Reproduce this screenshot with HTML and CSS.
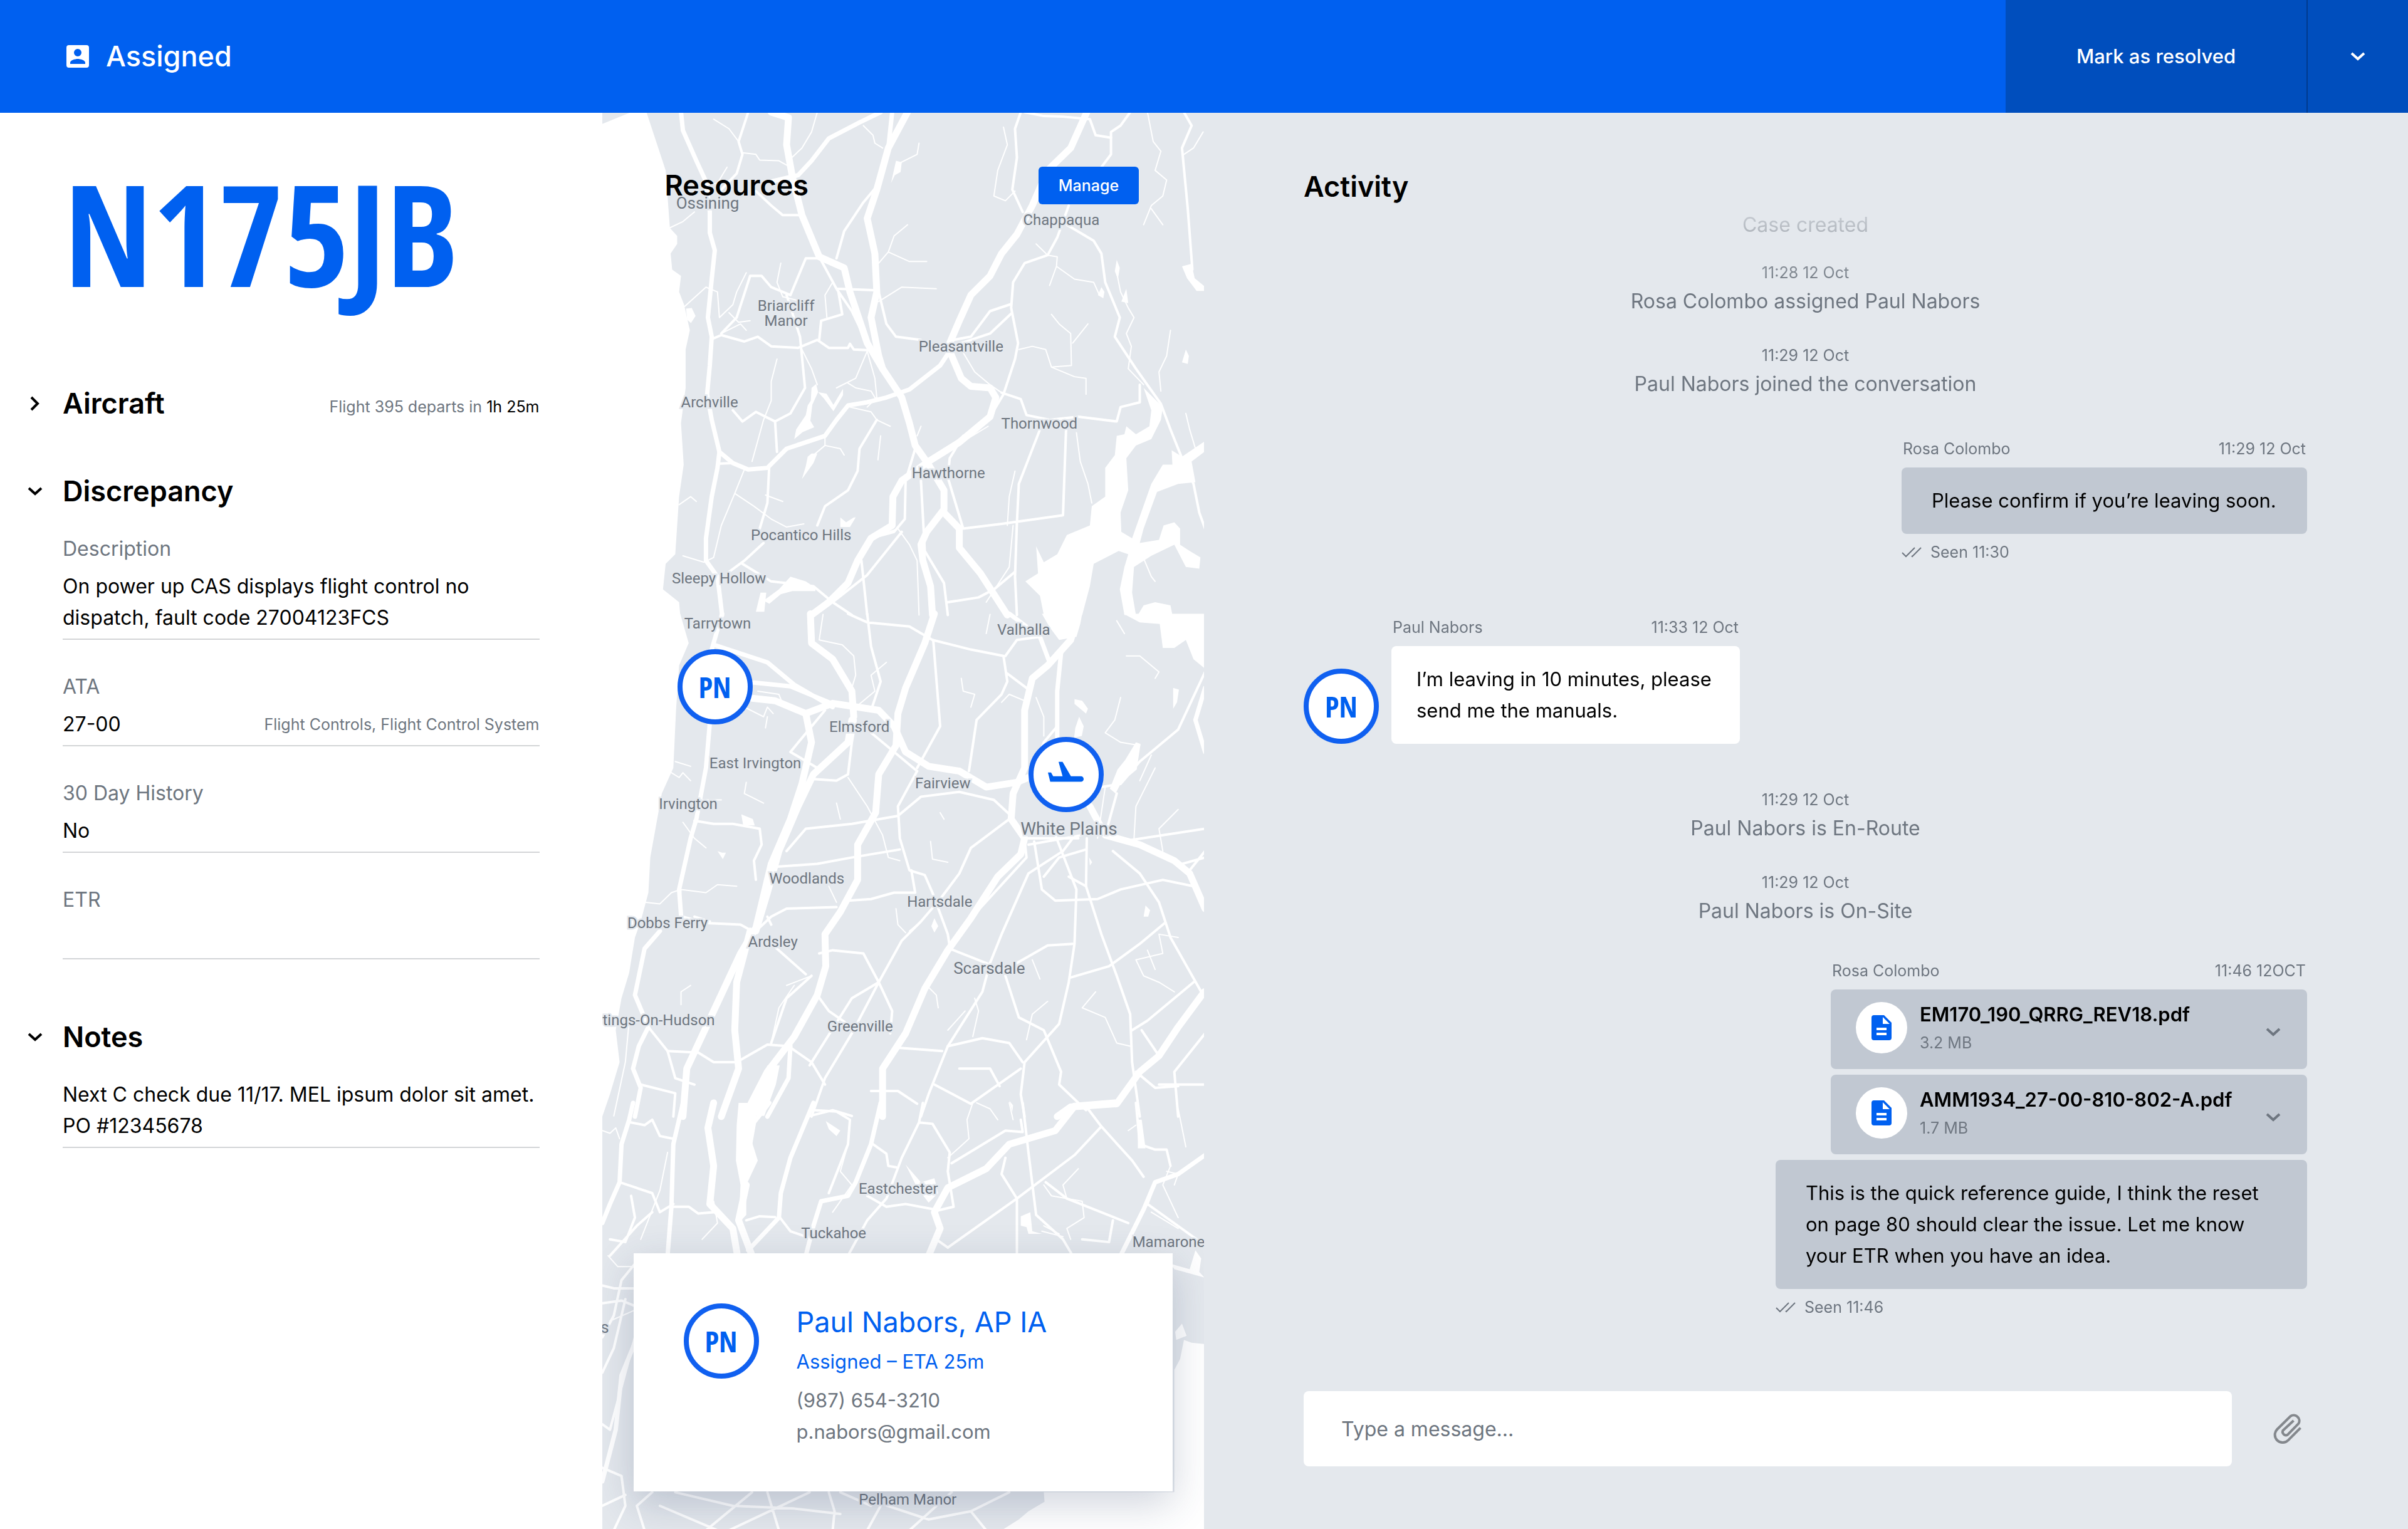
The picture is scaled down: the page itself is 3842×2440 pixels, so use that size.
FILE: index.html
```html
<!DOCTYPE html>
<html lang="en">
<head>
<meta charset="utf-8">
<meta name="viewport" content="width=device-width, initial-scale=1">
<title>N175JB – Assigned</title>
<link rel="stylesheet" href="styles.css">
</head>
<body>
<svg class="symbols" aria-hidden="true">
  <symbol id="chevron-down" viewBox="0 0 24 16"><path d="M2 3l10 9 10-9" fill="none" stroke="currentColor" stroke-width="4"/></symbol>
  <symbol id="chevron-right" viewBox="0 0 16 24"><path d="M2 2l10 10-10 10" fill="none" stroke="currentColor" stroke-width="4"/></symbol>
  <symbol id="seen" viewBox="0 0 32 18"><path d="M1 10l6 6L21 2M16 15l1 1L31 2" fill="none" stroke="currentColor" stroke-width="2"/></symbol>
  <symbol id="file" viewBox="0 0 32 40"><path fill="currentColor" fill-rule="evenodd" d="M4 0h16l12 12v24a4 4 0 0 1-4 4H4a4 4 0 0 1-4-4V4a4 4 0 0 1 4-4zm14 3v11h11zM8 20v4h16v-4zm0 8v4h16v-4z"/></symbol>
</svg>

<header class="topbar">
  <div class="status-title">
    <svg class="badge-icon" viewBox="0 0 36 36" aria-hidden="true"><path fill="currentColor" fill-rule="evenodd" d="M4 0h28a4 4 0 0 1 4 4v28a4 4 0 0 1-4 4H4a4 4 0 0 1-4-4V4a4 4 0 0 1 4-4zm14 6a6 6 0 1 0 0 12 6 6 0 0 0 0-12zm12 24v-2c0-4-8-6-12-6S6 24 6 28v2z"/></svg>
    <h1>Assigned</h1>
  </div>
  <div class="actions">
    <button class="action-main" type="button">Mark as resolved</button>
    <button class="action-more" type="button" aria-label="More actions"><svg class="chevron"><use href="#chevron-down"/></svg></button>
  </div>
</header>

<main class="columns">
  <section class="details">
    <p class="registration">N175JB</p>

    <section class="block">
      <div class="block-head">
        <button class="toggle" type="button" aria-label="Expand aircraft"><svg class="chevron-side"><use href="#chevron-right"/></svg></button>
        <h2>Aircraft</h2>
        <p class="hint">Flight 395 departs in <strong>1h 25m</strong></p>
      </div>
    </section>

    <section class="block">
      <div class="block-head">
        <button class="toggle" type="button" aria-label="Collapse discrepancy"><svg class="chevron"><use href="#chevron-down"/></svg></button>
        <h2>Discrepancy</h2>
      </div>
      <div class="fields">
        <div class="field">
          <label for="description">Description</label>
          <div class="value"><textarea id="description" rows="2">On power up CAS displays flight control no dispatch, fault code 27004123FCS</textarea></div>
        </div>
        <div class="field">
          <label for="ata">ATA</label>
          <div class="value"><input id="ata" type="text" value="27-00"><span class="hint">Flight Controls, Flight Control System</span></div>
        </div>
        <div class="field">
          <label for="history">30 Day History</label>
          <div class="value"><input id="history" type="text" value="No"></div>
        </div>
        <div class="field">
          <label for="etr">ETR</label>
          <div class="value"><input id="etr" type="text" value=""></div>
        </div>
      </div>
    </section>

    <section class="block block-notes">
      <div class="block-head">
        <button class="toggle" type="button" aria-label="Collapse notes"><svg class="chevron"><use href="#chevron-down"/></svg></button>
        <h2>Notes</h2>
      </div>
      <div class="fields">
        <div class="field">
          <div class="value"><textarea aria-label="Notes" rows="2">Next C check due 11/17. MEL ipsum dolor sit amet. PO #12345678</textarea></div>
        </div>
      </div>
    </section>
  </section>

  <section class="resources">
    <svg class="map" viewBox="0 0 960 2260" preserveAspectRatio="xMinYMin slice" role="img" aria-label="Map of Westchester">
      <g transform="scale(.6122 .5102)">
        <path class="water" d="M0 35L75 -2H115L165 180L176 360L195 385L195 410L178 440L182 490L205 510L200 560L213 600L228 680L217 740L217 860L205 970L212 1100L200 1200L190 1380L165 1410L158 1490L200 1530L203 1570H0z"/>
        <path class="water" d="M1410 860L1460 920L1455 960L1430 1020L1390 1040L1365 1080L1370 1180L1350 1250L1352 1310L1380 1330L1430 1160L1460 1100L1485 1100L1483 1055L1510 1075L1568 1028V1060L1535 1090L1545 1155L1500 1160L1445 1185L1410 1300L1400 1345L1450 1335L1462 1290L1490 1280L1505 1300L1505 1350L1530 1370L1558 1390L1555 1425L1520 1420L1490 1350L1430 1385L1385 1420L1380 1500L1390 1570H1360L1348 1490L1360 1420L1370 1380L1345 1370L1280 1410L1270 1480L1250 1570H1150L1140 1510L1102 1465L1135 1440L1130 1355L1150 1405L1185 1380L1210 1320L1270 1290L1275 1230L1310 1200L1310 1110L1335 1070L1340 1010L1360 1005L1365 980L1390 1005L1425 980L1430 930z"/>
        <path class="water" d="M1510 480l25-8 8 45 25 25v15h-20l-25-40zM1340 460l8 25-5 35-8-25zM1365 550l5 45-18-5zM500 1020l5-30 25-45 5-30 8-15 2-40 12-12 5 25 22 5 18 35 10-20 15-30v20l-25 50-25-40-15-20-15 40-5 50 10 20-30 15zM535 1075l10-10h15l-10 30-30 50 10-40zM218 612l15-2 10 25-12 22-10-10zM460 1490l30-40 40 15 25 20v10h-60l-30 10-30 30-15-10zM1410 1540l30-10 40 10 5 30h-90zM400 1560l12-60 15 0-5 60zM620 1265l15 15 20-15 5 0-15 30-25 0zM765 150l15 5-3 30-15 10-10 25zM1520 740l8 20-3 25-15-5zM1300 545l8 15-3 20-14-10z"/>
        <g class="major">
          <path d="M440 -2L485 15L480 100L495 200L520 320L565 450L630 485L645 560L690 720L730 800L780 890L800 970L815 1040L850 1100L890 1180L890 1240L845 1310L830 1350L835 1400L855 1480L860 1570"/>
          <path d="M795 -2L745 110L715 240L690 330L710 440L715 560L700 640L720 760L730 800"/>
          <path d="M1262 -2L1220 110L1160 180L1120 290L1080 380L1040 440L1010 510L960 570L930 650L905 720"/>
          <path d="M905 745L935 830L960 855L1010 860L1025 890L1010 950L930 1030L850 1090L780 1150L757 1200L755 1290L700 1330L665 1400L640 1470L590 1530L545 1570"/>
          <path d="M890 1250L930 1300L930 1360L985 1440L1055 1570"/>
        </g>
        <g class="main">
          <path d="M205 -2L210 55L245 150L270 215L280 310L280 375L293 430L285 520L275 640L285 700L280 790L273 880L285 960L305 1060L300 1110L285 1200L270 1330L270 1400L300 1450L312 1570"/>
          <path d="M905 745L880 790L800 865L740 890L690 905L640 915L610 960L580 1010L480 1050L430 1110L380 1115L340 1095L305 1060"/>
          <path d="M755 -2L745 110M725 -2L670 30L590 80L545 150L510 195L440 215"/>
        </g>
        <g class="road">
          <path d="M610 455L630 370L680 280L715 230M380 -2L355 90L365 130L350 190L310 240M400 245L440 290L470 320L515 320M1090 -2L1075 50L1080 140L1068 240L1095 310"/>
          <path d="M1375 -2L1350 40L1325 60L1325 130L1300 170M1215 290L1185 390L1160 445L1100 470L1070 530L1065 610L1083 720L1075 770L1045 880L1020 930"/>
          <path d="M1100 -2L1150 10L1200 12L1270 20L1285 70L1325 78M1515 -2L1535 40L1510 110L1525 300L1537 490"/>
          <path d="M1210 350L1280 400L1300 440L1310 530L1348 640L1335 700L1390 800L1455 910L1480 990L1510 1080L1540 1160L1555 1250L1570 1300"/>
          <path d="M905 712L960 700L1010 620L1065 598M1065 628L1010 690L930 722M1040 875L1090 895L1105 945L1165 960L1240 950L1340 965L1350 920L1400 905L1400 850"/>
          <path d="M1140 990L1085 1160L1080 1280L1075 1450L1080 1570M1208 990L1200 1258L1040 1285L940 1300L900 1140L905 1080L940 1010"/>
          <path d="M815 1050L790 1150L788 1270L760 1310L700 1330M830 1150L840 1370L890 1470L900 1570M290 705L310 695L370 715L405 700L440 730L510 735L560 710L590 735L640 735L645 722L655 740L690 742"/>
          <path d="M565 710L570 650L625 630L615 560M610 550L715 555M565 450L610 550L650 620L690 720M720 560L740 660L765 700L830 710M600 1530L690 1445L780 1310"/>
          <path d="M480 570L515 700L528 860L490 940L450 965L400 935L365 965L340 930M450 965L455 1060M435 1100L430 1220L410 1300M715 960L670 1050L665 1120L640 1180L580 1230L560 1290"/>
          <path d="M420 1345L370 1400L330 1435M365 1410L440 1465L550 1480L600 1530L650 1570M675 1400L690 1570M900 1530L980 1515L1020 1490L1075 1435M310 690L350 640L385 510L415 510L440 545L490 570L530 455L560 455M300 1097L340 1095"/>
        </g>
        <g class="lane">
          <path d="M560 -2L545 60L520 110L485 150M365 125L400 130L410 148L460 150L490 170M290 20L330 50L355 90M680 40L705 70L710 95L730 110M825 95L820 130L770 160M1045 45L1055 100L1030 180L1020 260L1050 275L1075 245M1420 -2L1435 90L1455 120L1440 180L1470 210L1460 260L1430 290L1410 350M1430 300L1460 350M1565 60L1540 110L1515 130"/>
          <path d="M795 350L760 385L745 435L800 465L845 465M745 435L720 470M720 590L780 545L870 550M1130 410L1160 445L1185 450L1183 480L1230 520L1280 530L1295 570M1183 480L1165 540M1340 500L1350 560L1370 610L1385 640L1365 690L1378 730L1370 800L1410 850M1170 630L1190 660L1220 690L1222 790L1170 795L1155 740L1120 730L1085 740M1170 795L1230 825L1260 830L1260 880M1265 660L1225 720M1480 680L1470 760L1450 810L1455 870M940 750L970 810L1010 850L1040 875"/>
          <path d="M215 605L270 545L300 560L305 640L340 600L350 560L375 500M330 625L355 655L385 650M310 690L360 660L375 680M465 470L455 530L470 575L520 590M600 530L580 570L585 640M455 770L440 840L440 900L420 960L390 1090M560 850L545 800L520 740M690 745L660 830L610 860M690 745L710 830L715 890L690 920M640 845L660 860L700 870L715 900M645 920L700 935L715 960L750 980M580 1015L580 1040L620 1050L630 1070M580 1040L550 1070"/>
          <path d="M370 1115L345 1190L395 1230L440 1270L480 1295L525 1285M425 1195L470 1215M345 1190L310 1290L290 1390L265 1405L210 1385M200 1225L230 1200L245 1215M830 980L820 1010M725 1010L718 1085M1235 1000L1245 1090L1265 1160L1275 1220M1075 1120L1060 1200L1055 1290M1005 980L950 1020L890 1050M700 1330L770 1300L800 1350L820 1400L825 1570M1070 1290L1060 1420L1000 1530M1395 1350L1430 1450L1440 1465M1520 940L1530 990L1545 1050M175 360L210 340L240 310M325 170L300 220L270 225"/>
        </g>
      </g>
      <g transform="translate(0 800) scale(.6122 .5102)">
        <path class="water" d="M0 -2H203L225 90L200 160L192 300L185 480L155 560L140 660L125 760L120 870L100 960L85 1010L70 1120L50 1200L35 1300L45 1400L20 1500L0 1570z"/>
        <path class="water" d="M1145 -2H1250L1245 30L1235 70L1190 80L1165 40zM1358 -2H1570V170L1540 140L1520 80L1490 105L1460 105L1452 30L1400 25zM1230 265l20 5 15 25-5 15-30-30zM1242 320l12 30-5 30-20 5 3-30zM1390 400l12 5-10 80-40 40-15 35-15-15 20-60 20-30zM1487 230l15 5-5 40-10 20zM1415 910l12 15-5 20-12 0zM865 950l10 25-10 20-8-20zM300 740l12 5 10 0-8 20zM362 625l30 15 5 20-30 0zM430 1410l32 0-10 60-30 98h-50zM1060 1520l10 15-2 20zM1268 760l8 15-6 10z"/>
        <g class="major">
          <path d="M542 -2L545 90L600 140L650 240L655 320M865 -2L840 90L790 230L770 310L765 410L720 500L712 620L665 720L665 830L620 930L580 1000L582 1100L560 1190L500 1320L430 1430L370 1570"/>
          <path d="M390 262L450 270L530 310L600 278L720 300L760 350L790 430L850 475L930 490L1000 540L1080 525L1110 510M530 310L545 400L520 530L490 640L440 780L400 980L360 1060L290 1240L220 1420L210 1570"/>
          <path d="M650 330L640 400L550 500L510 600L460 740L430 870L400 990M1240 -2L1220 80L1160 160L1120 200L1100 300L1100 480L1070 560L1065 640L1100 700L1090 750L1030 820L960 950L900 1050L840 1170L790 1310L730 1420L730 1570"/>
          <path d="M1270 600L1310 690L1400 720L1490 770L1530 810L1570 920M385 990L350 1150L345 1300L355 1420L310 1570M1568 1180L1500 1290L1450 1380L1400 1430L1340 1530L1220 1540L1185 1570"/>
        </g>
        <g class="main">
          <path d="M312 -2L285 110M280 340L270 480L245 640L230 700L200 860L205 940M150 990L110 1045L85 1190L120 1290L95 1350L80 1420L100 1480L85 1570M290 95L430 150L500 220L600 290M395 213L490 225L600 280M1060 -2L1140 70L1165 150M1195 120L1185 240L1185 390M490 1350L485 1450L430 1570M1570 230L1545 330L1570 430"/>
        </g>
        <g class="road">
          <path d="M640 -2L690 25L800 38L860 80L960 110L1045 130L1055 210L1040 250L975 330L955 490M690 -2L700 100L725 210L700 300M862 80L880 350L820 480M1055 185L1105 230M1050 130L1080 80L1140 70"/>
          <path d="M550 515L610 520L640 500L650 400L660 330M480 740L530 670L650 655L770 630L830 570L930 555L1020 580L1065 630M440 790L560 780L650 760L775 735M820 490L770 600L775 700L800 800L840 815L860 870L900 1000L905 1040"/>
          <path d="M640 895L700 890L760 870L815 870L805 800M430 945L440 970M400 990L440 945L480 920L610 915M1060 640L960 730L930 810L880 890L830 960L780 1020L720 1150L650 1310L580 1450L545 1570"/>
          <path d="M1100 700L1240 700M1110 720L1250 690M1225 700L1200 740L1110 810L1040 1000L1010 1090L990 1180L900 1350L850 1500L830 1570M1262 700L1260 850L1300 1000L1340 1130L1375 1250L1380 1400L1400 1570M1180 690L1235 860L1230 1030L1215 1150L1190 1280L1100 1400L1090 1500L1100 1570"/>
          <path d="M1125 710L1145 860L1180 895L1290 890L1350 860L1460 830L1540 850M1330 740L1400 810L1450 900L1480 1010L1560 1180M1220 1135L1320 1100L1400 1030L1465 965M905 1045L1010 1095M1080 1090L1160 1035L1225 1030M1050 1130L1085 1260L1150 1300L1195 1430L1190 1470L1260 1550"/>
          <path d="M900 1350L990 1325L1060 1340L1095 1400M770 1355L885 1365M170 1365L250 1370L290 1400L350 1400L430 1345L485 1350L545 1400L580 1470M565 1060L600 1050L680 1060L720 1150L755 1240L750 1310M700 370L820 490M560 1190L590 1240L650 1290"/>
          <path d="M120 1290L170 1365L190 1450L240 1470M100 1470L190 1497L185 1570M865 1470L960 1530L1090 1420M930 1420L1010 1420L1035 1475M1380 1300L1420 1270L1540 1150M1405 1300L1450 1380M1380 705L1570 670M1300 540L1350 530L1400 460L1500 360L1570 180M1310 690L1340 560M1450 1470L1570 1470M1570 1310L1490 1430L1500 1570M210 945L270 965L360 970L390 990M530 1125L450 1040M545 1130L480 1200L440 1340M1390 1430L1440 1480L1500 1475M240 645L290 655L340 655L410 670L415 720L395 770L400 830M1215 820L1260 850M1100 705L1105 760L960 950M560 480L490 430L580 300M280 960L240 945M1115 510L1150 400L1185 350M540 1568L600 1550L650 1568M700 1490L770 1490L820 1530"/>
          <path d="M1530 800L1570 740M1510 780L1570 760M1150 820L1190 760L1260 735M720 1150L650 1200L540 1410"/>
        </g>
        <g class="lane">
          <path d="M575 0L565 80L625 95L655 130L660 190L650 230M740 150L700 190L710 240L660 290M370 290L420 320L430 290L445 310M430 320L425 355M405 240L460 250L470 280L500 290M190 460L230 475M180 495L200 510L210 495L230 520M220 590L260 580L310 580M375 525L370 560L420 590M110 900L150 905L180 870L205 860L270 870L300 845L350 850M210 650L240 700L270 730M205 860L200 960M640 510L690 600L730 690L745 760L775 770M855 710L860 765L900 775M935 200L940 240L970 250L960 290M1040 275L1060 250L1100 270M1365 130L1400 130L1450 180L1440 200M1350 260L1335 330L1310 370L1350 400L1400 410M1430 440L1400 520M1500 610L1450 670L1460 740M1010 0L1000 60M1340 20L1360 60"/>
          <path d="M610 590L620 640M590 850L610 900M765 920L770 970L790 995M830 960L800 990M1120 1080L1140 1140M1285 1180L1250 1230L1310 1260L1340 1340L1375 1350M1500 1010L1450 1000L1460 1060L1390 1080L1410 1130L1450 1150L1490 1180M845 1160L870 1190L875 1230M970 1200L980 1240L965 1320M945 1240L900 1300M1160 1210L1120 1250L1105 1330M205 1220L205 1180L230 1160M500 1160L460 1230L440 1340M545 1130L480 1160M70 1270L60 1400L30 1568M880 620L890 640M1130 260L1150 320L1150 380M1440 480L1390 600L1385 700M1310 540L1290 700M1420 1050L1440 1110"/>
        </g>
      </g>
      <g transform="translate(0 1580) scale(.6122 .4337)">
        <path class="water" d="M1570 885L1535 880L1515 870L1505 940L1490 980V1430H1150L1152 1465L1110 1500L1085 1530L1040 1570H1570zM355 -2H400L400 60L385 120L405 210L385 270L375 300L375 410L355 440L360 300L348 210L350 80zM1480 590L1530 610L1545 540L1560 570L1555 620L1568 640L1490 610zM582 65L620 100L610 120L590 95zM790 225L830 290L865 275L875 330L850 365L820 310zM1090 415L1115 400L1120 470L1145 480L1110 480L1105 455L1090 450zM1395 60L1405 60L1415 165L1395 165zM1492 840L1510 810L1522 855L1495 870z"/>
        <g class="major">
          <path d="M290 -2L275 90L290 230L280 370L340 460L352 560M375 300L355 430L390 560M1335 -2L1230 10L1180 100L1060 150L1000 240L900 310L865 400L880 460L850 560"/>
        </g>
        <g class="main">
          <path d="M80 -2L70 60L50 150L45 290L20 370L0 440M210 -2L185 150L180 380L170 560M435 -2L395 70L385 150M550 -2L490 200L465 330L460 420L380 540M725 -2L700 150L660 290L640 340L570 360L550 450L530 560M1570 190L1500 260L1440 290L1410 390L1350 560M85 880L50 1000L35 1200L0 1390"/>
        </g>
        <g class="road">
          <path d="M75 70L110 80L130 60L150 120L185 130M555 25L610 30L645 60L640 150L590 330M835 -2L825 70L780 200L740 350L690 430L640 560M825 70L860 75L905 180L900 250L915 380L870 395M1095 -2L1110 180L1130 410L1200 500L1225 560"/>
          <path d="M1265 20L1300 85L1230 190L1080 350L900 530M1300 85L1380 210L1410 270M1155 290L1210 350L1370 440M1390 -2L1400 150L1440 170L1470 170L1480 230M460 415L490 470L530 490M375 430L410 415L450 418M185 380L225 380L250 405L290 400M690 340L740 380L790 370L865 390M705 150L740 185L745 230L765 235M910 220L1050 100L1095 105L1090 60"/>
          <path d="M45 290L130 330L150 400L185 370M130 400L90 450L20 560M75 340L85 420L60 510L20 500M0 670L30 680L85 680M0 735L50 725L85 745M85 590L50 650L30 780L0 860M60 720L30 900L0 990M0 1340L50 1370L60 1480L30 1570M85 860L20 1200L0 1180M1080 350L1080 560M900 530L870 500M1050 200L1040 260L1080 350M1440 290L1420 370L1568 520M1330 430L1320 510L1250 500"/>
          <path d="M130 1430L90 1480L110 1570M270 1570L390 1430M330 1570L540 1430M150 1480L300 1570M190 1430L340 1480L500 1490L620 1510M590 1430L605 1500L600 1570M725 1480L690 1570M700 1460L850 1530L960 1500L1060 1430M800 1570L910 1430M430 1430L460 1570M0 1480L60 1440M620 1430L700 1480M960 1500L1000 1570"/>
        </g>
        <g class="lane">
          <path d="M0 100L20 110L35 90L45 130M170 180L150 320L100 500M640 150L620 250L650 300L600 400M965 -2L950 60L955 130L900 200M975 -2L1010 20L1030 60M1150 300L1170 340L1250 360L1255 420L1210 460L1220 500M1145 470L1200 490M1480 230L1460 300L1500 420M1500 20L1520 160M1240 240L1200 300L1210 350M290 360L300 440L260 500M1060 -2L1070 60M1390 80L1370 100M1150 450L1190 480M1470 250L1500 260L1490 300M1430 400L1500 460M15 560L40 600L85 600M20 800L85 760"/>
        </g>
      </g>
      <g class="places">
        <text x="168" y="153" class="town">Ossining</text><text x="732" y="179">Chappaqua</text>
        <text x="293" y="316">Briarcliff</text><text x="293" y="340">Manor</text>
        <text x="572" y="381">Pleasantville</text><text x="171" y="470">Archville</text>
        <text x="697" y="504">Thornwood</text><text x="552" y="583">Hawthorne</text>
        <text x="317" y="682">Pocantico Hills</text><text x="186" y="751">Sleepy Hollow</text>
        <text x="184" y="823">Tarrytown</text><text x="672" y="833">Valhalla</text>
        <text x="410" y="987">Elmsford</text><text x="244" y="1045">East Irvington</text>
        <text x="543" y="1077">Fairview</text><text x="137" y="1110">Irvington</text>
        <text x="744" y="1151" class="city">White Plains</text><text x="326" y="1229">Woodlands</text>
        <text x="538" y="1266">Hartsdale</text><text x="104" y="1300">Dobbs Ferry</text>
        <text x="272" y="1330">Ardsley</text><text x="617" y="1373" class="town">Scarsdale</text>
        <text x="90" y="1455">tings-On-Hudson</text><text x="411" y="1465">Greenville</text>
        <text x="472" y="1724">Eastchester</text><text x="369" y="1795">Tuckahoe</text>
        <text x="903" y="1809">Mamarone</text><text x="4" y="1946" class="town">s</text>
        <text x="487" y="2220">Pelham Manor</text>
      </g>
    </svg>
    <div class="avatar pin pin-person">PN</div>
    <div class="avatar pin pin-plane"><svg class="plane" viewBox="0 0 174 98" role="img" aria-label="Aircraft"><path fill="currentColor" d="M51 2h19l40 69h48a13 13 0 0 1 0 26H11L0 53h15l10 18h45z"/></svg></div>

    <div class="panel-head">
      <h2>Resources</h2>
      <button class="manage" type="button">Manage</button>
    </div>
    <article class="card">
      <div class="avatar">PN</div>
      <div class="card-text">
        <h3>Paul Nabors, AP IA</h3>
        <p class="card-status">Assigned – ETA 25m</p>
        <p>(987) 654-3210</p>
        <p>p.nabors@gmail.com</p>
      </div>
    </article>
  </section>

  <section class="activity">
    <h2>Activity</h2>
    <div class="feed">
      <div class="event"><p>Case created</p></div>
      <div class="event gap-xs"><time>11:28 12 Oct</time><p>Rosa Colombo assigned Paul Nabors</p></div>
      <div class="event gap-s"><time>11:29 12 Oct</time><p>Paul Nabors joined the conversation</p></div>

      <article class="message sent gap-l">
        <div class="message-head"><span>Rosa Colombo</span><time>11:29 12 Oct</time></div>
        <p class="bubble">Please confirm if you’re leaving soon.</p>
        <p class="seen"><svg class="ticks"><use href="#seen"/></svg>Seen 11:30</p>
      </article>

      <article class="received gap-xxl">
        <div class="avatar">PN</div>
        <div class="message">
          <div class="message-head"><span>Paul Nabors</span><time>11:33 12 Oct</time></div>
          <p class="bubble">I’m leaving in 10 minutes, please send me the manuals.</p>
        </div>
      </article>

      <div class="event gap-xl"><time>11:29 12 Oct</time><p>Paul Nabors is En-Route</p></div>
      <div class="event gap-s"><time>11:29 12 Oct</time><p>Paul Nabors is On-Site</p></div>

      <article class="message sent wide gap-m">
        <div class="attachments">
          <div class="message-head"><span>Rosa Colombo</span><time>11:46 12OCT</time></div>
          <div class="file">
            <span class="file-icon"><svg><use href="#file"/></svg></span>
            <div class="file-text"><p class="file-name">EM170_190_QRRG_REV18.pdf</p><p class="file-size">3.2 MB</p></div>
            <button class="file-more" type="button" aria-label="File options"><svg class="chevron"><use href="#chevron-down"/></svg></button>
          </div>
          <div class="file">
            <span class="file-icon"><svg><use href="#file"/></svg></span>
            <div class="file-text"><p class="file-name">AMM1934_27-00-810-802-A.pdf</p><p class="file-size">1.7 MB</p></div>
            <button class="file-more" type="button" aria-label="File options"><svg class="chevron"><use href="#chevron-down"/></svg></button>
          </div>
        </div>
        <p class="bubble">This is the quick reference guide, I think the reset on page 80 should clear the issue. Let me know your ETR when you have an idea.</p>
        <p class="seen"><svg class="ticks"><use href="#seen"/></svg>Seen 11:46</p>
      </article>
    </div>

    <form class="composer">
      <input type="text" aria-label="Message" placeholder="Type a message...">
      <button class="attach" type="button" aria-label="Attach a file"><svg viewBox="440 160 140 156"><path d="M570 234L511 293A37 37 0 0 1 458 241L522 178A27 27 0 0 1 561 213L508 267A16 16 0 0 1 486 246L537 199" fill="none" stroke="currentColor" stroke-width="12"/></svg></button>
    </form>
  </section>
</main>
</body>
</html>
```
FILE: styles.css
```css
:root {
  --blue: #0060f0;
  --blue-dark: #004ebd;
  --ring: #1060f0;
  --grey: #6e7680;
  --surface: #e4e8ed;
  --bubble: #c1c8d2;
  --rule: #d3d5d7;
}

* { box-sizing: border-box; }

body {
  margin: 0;
  min-height: 100vh;
  display: flex;
  flex-direction: column;
  background: #fff;
  color: #000;
  font: 400 32px/50px Inter, "Liberation Sans", sans-serif;
}

h1, h2, h3, p { margin: 0; }

h1, h2 {
  font-size: 45px;
  line-height: 60px;
  font-weight: 600;
}

h1 { font-weight: 500; }

button, input, textarea {
  margin: 0;
  padding: 0;
  border: 0;
  background: none;
  color: inherit;
  font: inherit;
}

button { cursor: pointer; }

svg { display: block; }

.symbols {
  position: absolute;
  width: 0;
  height: 0;
}

.chevron { width: 24px; height: 16px; }
.chevron-side { width: 16px; height: 24px; }

/* Top bar */

.topbar {
  display: flex;
  justify-content: space-between;
  height: 180px;
  background: var(--blue);
  color: #fff;
}

.status-title {
  display: flex;
  align-items: center;
  gap: 27px;
  padding-left: 106px;
}

.badge-icon { width: 36px; height: 36px; }

.actions {
  display: flex;
  background: var(--blue-dark);
}

.action-main {
  width: 482px;
  border-right: 2px solid #003a8f;
  font-size: 31px;
  font-weight: 500;
}

.action-more {
  display: flex;
  align-items: center;
  justify-content: center;
  width: 160px;
}

/* Columns */

.columns {
  flex: 1;
  display: grid;
  grid-template-columns: minmax(0, 1fr) minmax(0, 1fr) minmax(0, 2fr);
}

/* Details */

.details { padding: 80px 100px 80px 44px; }

.registration {
  padding-left: 58px;
  color: var(--blue);
  font: 700 226px/220px "Open Sans Condensed", "Roboto Condensed", sans-serif;
}

.block { margin-top: 80px; }
.registration + .block { margin-top: 134px; }
.block-notes { margin-top: 94px; }

.block-head {
  display: flex;
  align-items: center;
  gap: 32px;
}

.block-head .hint {
  margin-left: auto;
  padding-top: 10px;
}

.toggle {
  display: flex;
  justify-content: center;
  width: 24px;
}

.hint {
  color: var(--grey);
  font-size: 25px;
  white-space: nowrap;
}

.hint strong {
  color: #000;
  font-weight: 400;
}

.fields {
  display: grid;
  grid-template-columns: minmax(0, 1fr);
  gap: 50px;
  margin-top: 37px;
  padding-left: 56px;
}

.field label {
  display: block;
  margin-bottom: 10px;
  color: var(--grey);
}

.value {
  display: flex;
  align-items: flex-end;
  padding-bottom: 8px;
  border-bottom: 2px solid var(--rule);
}

.value input, .value textarea {
  flex: 1;
  min-width: 0;
  height: 50px;
  outline: 0;
}

.value textarea {
  height: 100px;
  resize: none;
  overflow: hidden;
}

/* Map and resources */

.resources {
  position: relative;
  display: flex;
  flex-direction: column;
  justify-content: space-between;
  padding: 86px 50px 60px;
  overflow: hidden;
  background: var(--surface);
}

.map {
  position: absolute;
  inset: 0;
  width: 100%;
  height: 100%;
}

.water { fill: #fff; }

.major, .main, .road, .lane {
  fill: none;
  stroke: #fff;
  stroke-linejoin: round;
  stroke-linecap: round;
}

.map path { vector-effect: non-scaling-stroke; }
.major { stroke-width: 11px; }
.main { stroke-width: 7px; }
.road { stroke-width: 4px; }
.lane { stroke-width: 2px; }

.places {
  fill: var(--grey);
  stroke: var(--surface);
  stroke-width: 5px;
  paint-order: stroke;
  text-anchor: middle;
  font: 400 24px Roboto, sans-serif;
}

.town { font-size: 26px; }
.city { font-size: 28px; }

.avatar {
  display: flex;
  flex: none;
  align-items: center;
  justify-content: center;
  width: 120px;
  height: 120px;
  border: 8px solid var(--ring);
  border-radius: 50%;
  background: #fff;
  color: var(--blue);
  font: 700 47px/50px "Open Sans Condensed", "Roboto Condensed", sans-serif;
}

.pin { position: absolute; }
.pin-person { left: 120px; top: 856px; }
.pin-plane { left: 680px; top: 996px; padding-bottom: 10px; }
.plane { width: 58px; height: 33px; }

.panel-head {
  position: relative;
  display: flex;
  align-items: center;
  justify-content: space-between;
  padding: 0 54px 0 50px;
}

.manage {
  width: 160px;
  height: 60px;
  border-radius: 6px;
  background: var(--blue);
  color: #fff;
  font-size: 25px;
  font-weight: 500;
}

.card {
  position: relative;
  display: flex;
  gap: 60px;
  padding: 80px 80px 70px;
  background: #fff;
  box-shadow: 0 20px 60px rgba(40, 60, 100, .22);
  color: var(--grey);
  font-size: 31px;
}

.card h3 {
  margin-bottom: 8px;
  color: var(--blue);
  font-size: 45px;
  line-height: 60px;
  font-weight: 400;
}

.card-status {
  margin-bottom: 12px;
  color: var(--blue);
}

/* Activity */

.activity {
  display: flex;
  flex-direction: column;
  padding: 88px 161px 100px 159px;
  background: var(--surface);
}

.feed {
  padding-top: 6px;
  mask-image: linear-gradient(rgba(0, 0, 0, .15), #000 130px);
}

.gap-xs { margin-top: 36px; }
.gap-s { margin-top: 46px; }
.gap-m { margin-top: 55px; }
.gap-l { margin-top: 63px; }
.gap-xl { margin-top: 74px; }
.gap-xxl { margin-top: 90px; }

.event {
  display: grid;
  gap: 6px;
  color: var(--grey);
  text-align: center;
}

.event time, .message-head, .seen, .file-size {
  color: var(--grey);
  font-size: 25px;
  line-height: 30px;
}

.message { width: 556px; }

.message-head {
  display: flex;
  justify-content: space-between;
  margin-bottom: 15px;
  padding: 0 2px;
}

.bubble {
  padding: 28px 40px;
  border-radius: 8px;
  background: #fff;
  font-size: 31px;
}

.sent {
  width: 647px;
  margin-left: auto;
}

.sent .bubble {
  padding: 28px 48px;
  background: var(--bubble);
}

.sent.wide { width: 848px; }

.seen {
  display: flex;
  align-items: center;
  gap: 14px;
  margin-top: 14px;
}

.ticks { width: 32px; height: 18px; }

.received {
  display: flex;
  align-items: flex-end;
  gap: 20px;
}

.attachments {
  width: 760px;
  margin-left: auto;
}

.file {
  display: flex;
  gap: 20px;
  height: 127px;
  margin-bottom: 9px;
  padding: 20px 42px 0 40px;
  border-radius: 8px;
  background: var(--bubble);
}

.file-icon {
  display: flex;
  align-items: center;
  justify-content: center;
  width: 82px;
  height: 82px;
  border-radius: 50%;
  background: #fff;
  color: var(--blue);
}

.file-icon svg { width: 32px; height: 40px; }

.file-text {
  flex: 1;
  display: grid;
  gap: 10px;
  align-content: start;
}

.file-name {
  font-size: 31px;
  line-height: 40px;
  font-weight: 600;
}

.file-more {
  align-self: flex-start;
  padding-top: 40px;
  color: var(--grey);
}

.composer {
  display: flex;
  margin-top: auto;
}

.composer input {
  flex: 1;
  height: 120px;
  padding: 0 60px;
  border-radius: 8px;
  background: #fff;
}

.composer input::placeholder {
  color: var(--grey);
  opacity: 1;
}

.attach {
  display: flex;
  align-items: center;
  justify-content: flex-end;
  width: 120px;
  padding-right: 7px;
  color: #84888d;
}

.attach svg { width: 47px; height: 52px; }
```
